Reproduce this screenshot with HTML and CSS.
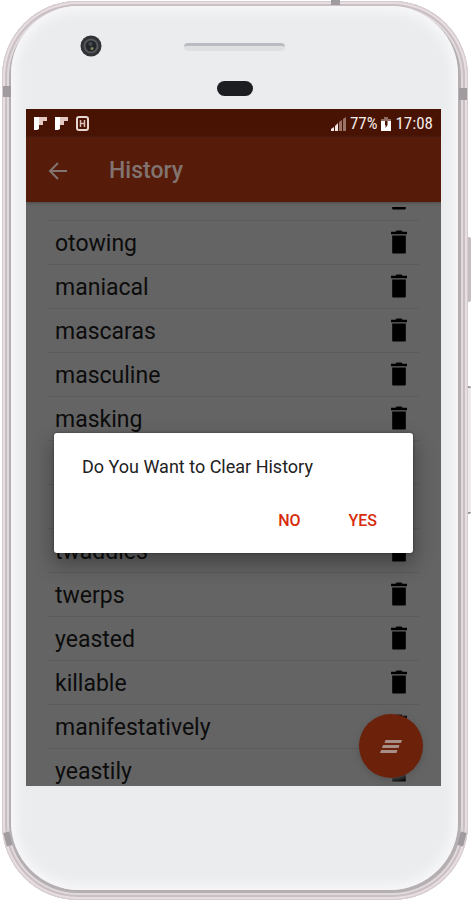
FILE: index.html
```html
<!DOCTYPE html>
<html lang="en">
<head>
<meta charset="utf-8">
<meta name="viewport" content="width=device-width, initial-scale=1">
<title>History</title>
<link rel="stylesheet" href="styles.css">
</head>
<body>
<svg class="sprite" aria-hidden="true">
  <symbol id="trash" viewBox="0 0 16 24">
    <path d="M0 1.800H4.500L5.500 .5H10.500L11.500 1.800H16V4.200H0zM1.200 5.400H14.800V22.400Q14.800 23.600 13.600 23.600H2.400Q1.200 23.600 1.200 22.400z"/>
  </symbol>
  <symbol id="flag" viewBox="0 0 13 13">
    <path fill="#fff" d="M0 0H5V12L3 13H0z"/>
    <path fill="#e3c9c2" d="M5 0H13V4H9V8H5z"/>
  </symbol>
</svg>
<div class="phone">
  <i class="seam seam-top"></i><i class="seam seam-left"></i><i class="seam seam-right"></i>
  <i class="seam seam-low-left"></i><i class="seam seam-low-right"></i>
  <i class="key key-power"></i><i class="key key-volume"></i>
  <div class="face">
    <div class="bezel">
      <svg class="camera" viewBox="0 0 22 22" aria-hidden="true">
        <circle cx="11" cy="11" r="10.500" fill="#303236"/>
        <circle cx="11" cy="11" r="7.500" fill="#55585b"/>
        <circle cx="11" cy="11" r="5.500" fill="#24272a"/>
        <circle cx="10.500" cy="9" r="2" fill="#484c50"/>
        <circle cx="12" cy="13.500" r="1.500" fill="#858461"/>
      </svg>
      <div class="speaker"></div>
      <div class="sensor"></div>
    </div>
    <main class="screen">
      <div class="status">
        <svg class="flag" aria-hidden="true"><use href="#flag"/></svg>
        <svg class="flag" aria-hidden="true"><use href="#flag"/></svg>
        <svg class="badge" viewBox="0 0 13 15" aria-hidden="true">
          <rect x="1" y="1" width="11" height="13" rx="2" fill="none" stroke="#e8d6d1" stroke-width="2"/>
          <path d="M4.500 4V11M8.500 4V11M4.500 7.500H8.500" stroke="#d9bdb5" stroke-width="1.500"/>
        </svg>
        <span class="spacer"></span>
        <svg class="signal" viewBox="0 0 15 14" aria-hidden="true">
          <path fill="#f4e9e6" d="M0 14V12L3 10V14zM4 14V9L7 6V14z"/>
          <path fill="#9b7469" d="M8 14V5L11 3V14zM12 14V2L15 0V14z"/>
        </svg>
        <span class="percent">77%</span>
        <svg class="battery" viewBox="0 0 10 14" aria-hidden="true">
          <path fill="#8f6c62" d="M3 0H7V2H10V4H0V2H3z"/>
          <path fill="#fff" d="M0 4H10V14H0z"/>
          <path fill="#481303" d="M4 4H6.500V8L4.500 11V8H4z"/>
        </svg>
        <time>17:08</time>
      </div>
      <header class="appbar">
        <button class="back" aria-label="Back">
          <svg viewBox="0 0 20 20" aria-hidden="true"><path d="M19 10H2M10 2L2 10L10 18" fill="none" stroke="currentColor" stroke-width="2"/></svg>
        </button>
        <h1>History</h1>
      </header>
      <div class="list-clip">
        <ul class="list">
          <li><span></span><button aria-label="Delete"><svg><use href="#trash"/></svg></button></li>
          <li><span>otowing</span><button aria-label="Delete"><svg><use href="#trash"/></svg></button></li>
          <li><span>maniacal</span><button aria-label="Delete"><svg><use href="#trash"/></svg></button></li>
          <li><span>mascaras</span><button aria-label="Delete"><svg><use href="#trash"/></svg></button></li>
          <li><span>masculine</span><button aria-label="Delete"><svg><use href="#trash"/></svg></button></li>
          <li><span>masking</span><button aria-label="Delete"><svg><use href="#trash"/></svg></button></li>
          <li></li>
          <li></li>
          <li><span>twaddles</span><button aria-label="Delete"><svg><use href="#trash"/></svg></button></li>
          <li><span>twerps</span><button aria-label="Delete"><svg><use href="#trash"/></svg></button></li>
          <li><span>yeasted</span><button aria-label="Delete"><svg><use href="#trash"/></svg></button></li>
          <li><span>killable</span><button aria-label="Delete"><svg><use href="#trash"/></svg></button></li>
          <li><span>manifestatively</span><button aria-label="Delete"><svg><use href="#trash"/></svg></button></li>
          <li><span>yeastily</span><button aria-label="Delete"><svg><use href="#trash"/></svg></button></li>
        </ul>
      </div>
      <button class="fab" aria-label="Clear history">
        <svg viewBox="0 0 22 13" aria-hidden="true"><path fill="#a78f88" d="M5.500 0H22L21 3H4.500zM3 5H19.500L18.500 8H2zM1 10H17.500L16.500 13H0z"/></svg>
      </button>
      <div class="overlay">
        <div class="dialog" role="dialog" aria-labelledby="question">
          <p id="question">Do You Want to Clear History</p>
          <div class="actions"><button>NO</button><button>YES</button></div>
        </div>
      </div>
    </main>
  </div>
</div>
</body>
</html>
```
FILE: styles.css
```css
* { box-sizing: border-box; }
body { margin: 0; background: #fff; font-family: Roboto, sans-serif; }
button { border: 0; padding: 0; background: none; font: inherit; color: inherit; display: flex; }
.sprite { position: absolute; width: 0; height: 0; }

/* handset */
.phone {
  position: relative;
  display: flex;
  height: 100vh;
  min-height: 600px;
  padding: 6px 13px 10px 11px;
}
.phone::before {
  content: "";
  position: absolute;
  inset: 1px 3px 0 2px;
  border-radius: 76px;
  background: #b5afb2;
  box-shadow: inset 0 0 0 1px #d6ccd0, inset 0 0 0 3px #e6dee1, inset 0 0 0 5px #cabfc3, inset 0 0 0 7px #dfd9dc;
}
.face {
  position: relative;
  flex: 1;
  min-width: 0;
  display: flex;
  flex-direction: column;
  padding: 0 17px 0 15px;
  border-radius: 68px;
  background: #ebecee;
  box-shadow: inset 0 0 12px 5px #f8f8fb;
}
.face::after { content: ""; flex: 0 0 104px; }
.seam { position: absolute; z-index: 1; background: #a09b9e; }
.seam-top { left: 331px; top: 0; width: 9px; height: 5px; }
.seam-left { left: 3px; top: 86px; width: 8px; height: 11px; }
.seam-right { right: 4px; top: 88px; width: 8px; height: 12px; }
.seam-low-left { left: 5px; bottom: 54px; width: 6px; height: 14px; transform: rotate(-14deg); }
.seam-low-right { right: 6px; bottom: 54px; width: 6px; height: 14px; transform: rotate(14deg); }
.key { position: absolute; right: 0; width: 3px; background: #c6bdc0; border-radius: 0 2px 2px 0; }
.key-power { top: 237px; height: 65px; }
.key-volume { top: 386px; height: 128px; background: #eee9eb; border: solid #999; border-width: 2px 0; }

.bezel { flex: 0 0 103px; position: relative; display: flex; flex-direction: column; align-items: center; gap: 30px; padding: 37px 0 0 2px; }
.camera { position: absolute; left: 54px; top: 29px; width: 22px; height: 22px; }
.speaker { width: 101px; height: 8px; border-radius: 4px; background: #dfe0e2; border-top: 3px solid #b9bcc1; }
.sensor { width: 36px; height: 15px; border-radius: 8px; background: #1c1e22; }

/* app */
.screen { position: relative; flex: 1; min-height: 0; display: flex; flex-direction: column; background: #646464; overflow: hidden; }
.status {
  flex: 0 0 28px;
  display: flex;
  align-items: center;
  gap: 8px;
  padding: 1px 8px 0;
  background: #481303;
  color: #f5ebe8;
  font: 17px/27px "Roboto Condensed", "Liberation Sans Narrow", Roboto, sans-serif;
}
.flag { width: 13px; height: 13px; }
.badge { width: 13px; height: 15px; }
.spacer { flex: 1; }
.signal { width: 15px; height: 14px; margin-right: -4px; }
.battery { width: 10px; height: 14px; margin: 0 -4px; }
.appbar { flex: 0 0 65px; display: flex; align-items: center; padding: 2px 22px 0; gap: 41px; background: #571b09; color: #817470; z-index: 1; box-shadow: 0 1px 3px #4a4a4a; }
.back svg { width: 20px; height: 20px; }
h1 { margin: 0; font-size: 23px; line-height: 28px; font-weight: 500; }
.list-clip { flex: 1; min-height: 0; margin-top: 5px; overflow: hidden; }
.list { list-style: none; margin: -30px 22px 0; padding: 0; }
.list li { height: 44px; display: flex; align-items: center; justify-content: space-between; padding: 0 12px 0 7px; border-bottom: 1px solid #5b5b5b; font-size: 23px; line-height: 28px; color: #0c0c0c; }
.list span { padding-top: 2px; }
.list button { margin-bottom: 2px; }
.list svg { width: 16px; height: 24px; fill: #000; }
.fab { position: absolute; right: 18px; bottom: 8px; width: 64px; height: 64px; border-radius: 50%; background: #6c210a; align-items: center; justify-content: center; box-shadow: 0 2px 6px #555; }
.fab svg { width: 22px; height: 13px; }
.overlay { position: absolute; inset: 0; z-index: 2; display: flex; align-items: center; padding: 90px 28px 0; }
.dialog { flex: 1; padding: 22px 28px 16px; background: #fff; border-radius: 3px; box-shadow: 0 10px 20px 2px rgba(0, 0, 0, .3), 0 0 3px rgba(0, 0, 0, .4); }
.dialog p { margin: 0; font-size: 18px; line-height: 24px; color: #222; }
.actions { display: flex; justify-content: flex-end; gap: 48px; padding: 25px 8px 0 0; }
.actions button { height: 33px; align-items: center; color: #d62c0c; font-size: 16px; font-weight: 500; }
```
